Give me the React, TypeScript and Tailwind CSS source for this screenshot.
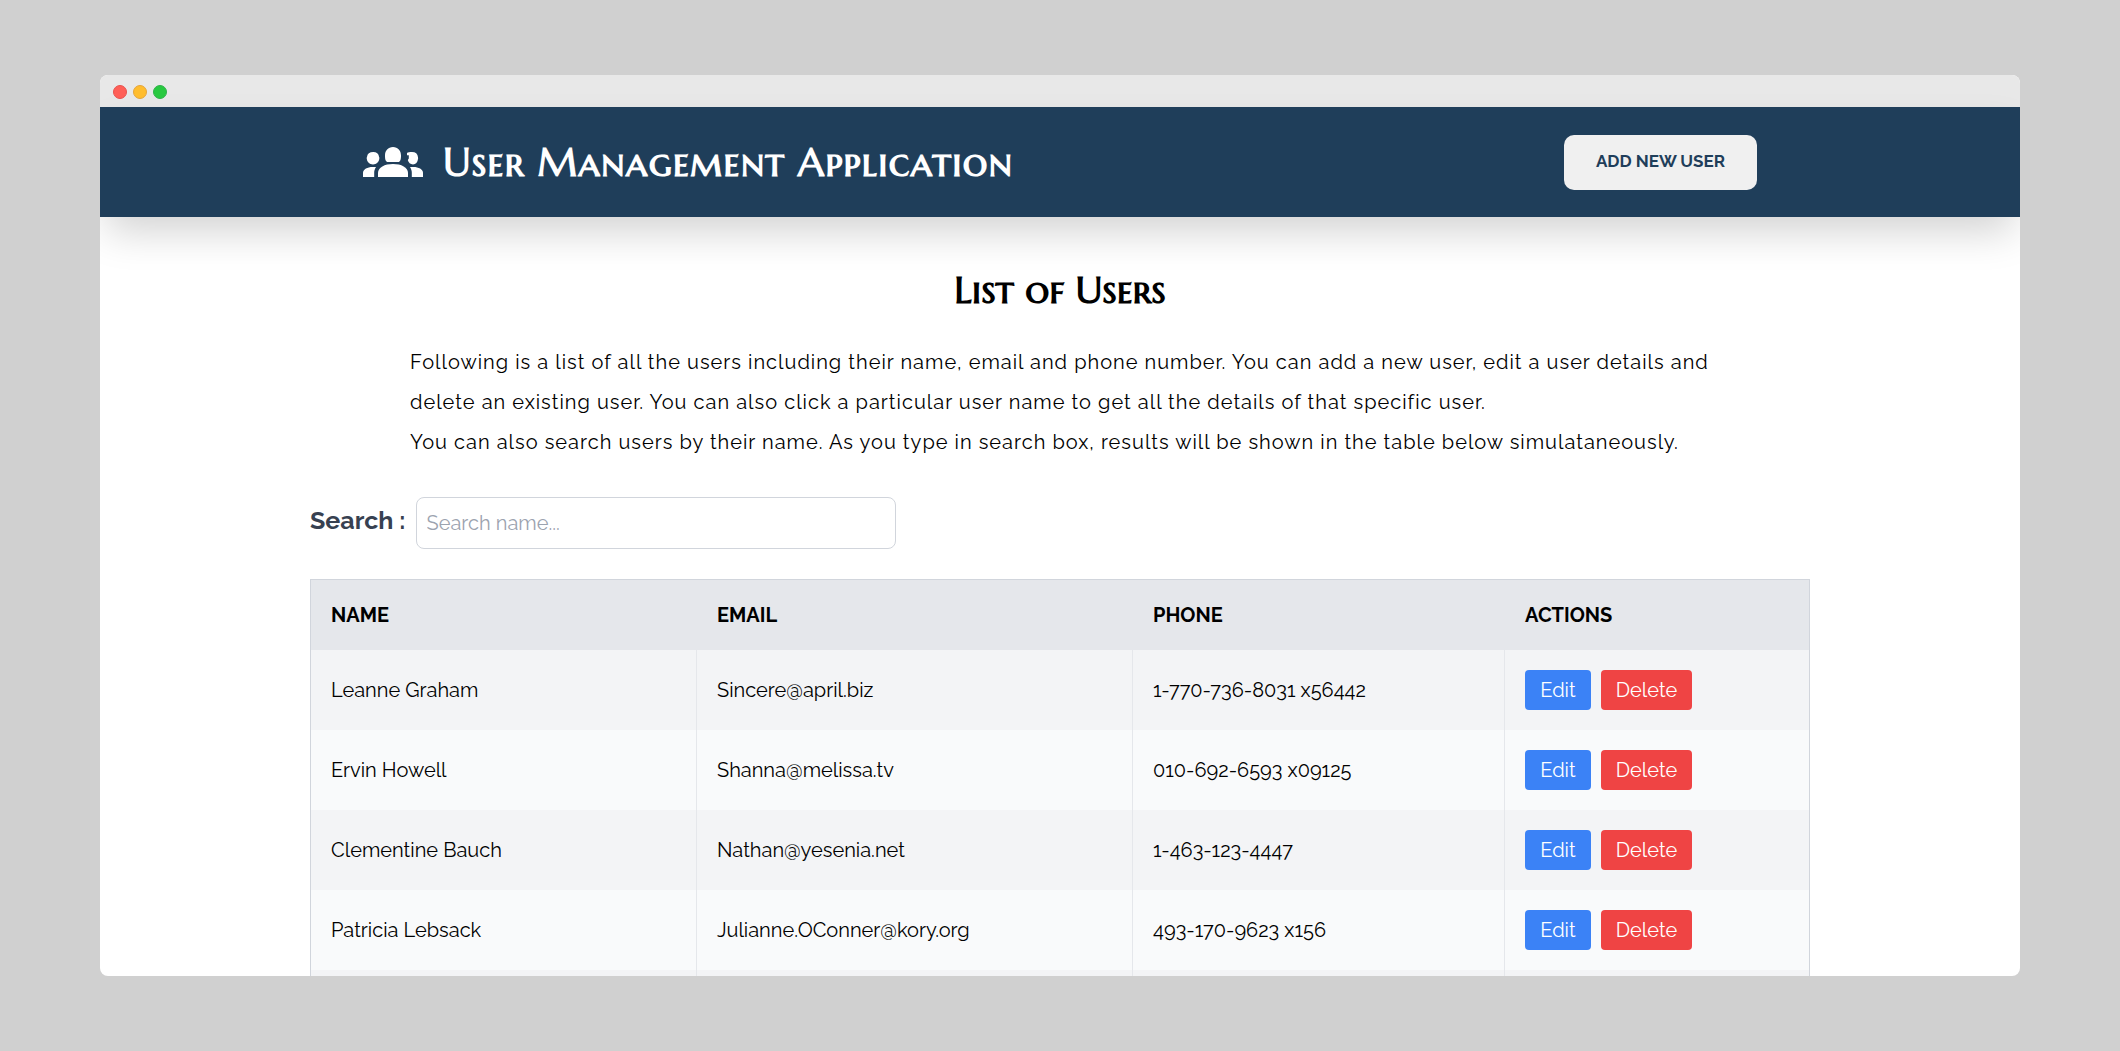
import { useState } from "react";

type User = { name: string; email: string; phone: string };

const users: User[] = [
  { name: "Leanne Graham", email: "Sincere@april.biz", phone: "1-770-736-8031 x56442" },
  { name: "Ervin Howell", email: "Shanna@melissa.tv", phone: "010-692-6593 x09125" },
  { name: "Clementine Bauch", email: "Nathan@yesenia.net", phone: "1-463-123-4447" },
  { name: "Patricia Lebsack", email: "Julianne.OConner@kory.org", phone: "493-170-9623 x156" },
];

function GroupIcon() {
  return (
    <svg viewBox="0 0 60 30" className="h-[30px] w-[60px] shrink-0" fill="currentColor" aria-hidden="true">
      <path d="M30 0c-4.900 0-8 3.600-8 8.500 0 2.500.2 4.500 1 5.400.7.900 1.500 1.100 2.500 1.100h9c1 0 1.800-.2 2.500-1.100.8-.9 1-2.900 1-5.400C38 3.600 34.900 0 30 0z" />
      <path d="M30 17c-8.300 0-15 3.400-15 9v4h30v-4c0-5.600-6.700-9-15-9z" />
      <path d="M10.200 5C6.600 5 4.300 6.700 4 10c-.3.600-.5 1-.2 1.800.3 3.200 2.800 5.600 6.200 5.600 3.500 0 5.900-2.400 6.300-5.600.2-.8.100-1.200-.2-1.800C15.700 6.700 13.600 5 10.200 5z" />
      <path d="M0 30v-4.200C0 22.300 4.500 20 9.500 20H13c-1.300 2-1.800 3.800-1.800 5.800V30z" />
      <path d="M44 6c1-.7 2.600-1 5-1 3.600 0 5.700 1.900 6 5.200.2.600.1 1.200 0 1.800-.4 3.200-2.200 5.400-5 5.400-2.700 0-4.500-1.700-5.200-4.400l1-1.500V8.200H44z" />
      <path d="M60 30v-4.200c0-3.500-4.500-5.800-9.500-5.800H47c1.300 2 1.800 3.800 1.800 5.800V30z" />
    </svg>
  );
}

export default function App() {
  const [query, setQuery] = useState("");
  const shown = users.filter((u) => u.name.toLowerCase().includes(query.toLowerCase()));

  return (
    <div className="flex h-screen flex-col bg-[#d0d0d0] px-[100px] py-[75px] font-[Raleway,Lato,sans-serif] text-xl text-black">
      <div className="flex-1 overflow-hidden rounded-lg bg-white">
        <div className="flex h-8 items-center gap-[6px] bg-[#e8e8e8] px-[13px] pt-0.5">
          <span className="size-[14px] rounded-full border border-[#e8524d] bg-[#ff5f57]" />
          <span className="size-[14px] rounded-full border border-[#e5a53a] bg-[#ffbd2e]" />
          <span className="size-[14px] rounded-full border border-[#2fb14a] bg-[#28c940]" />
        </div>

        <header className="bg-[#1f3e5a] shadow-[0_20px_40px_-6px_rgba(0,0,0,0.18)]">
          <div className="mx-auto flex h-[110px] w-full max-w-[1394px] items-center justify-between text-white">
            <div className="flex items-center gap-5">
              <GroupIcon />
              <h1 className="pt-0.5 font-['Marcellus_SC',Lato,sans-serif] text-[39px] leading-[60px] font-bold tracking-wide">
                User Management Application
              </h1>
            </div>
            <button type="button" className="h-[55px] w-[193px] rounded-[10px] bg-[#f0f0f0] pb-px text-[17px] font-bold text-[#1f3e5a]">
              ADD NEW USER
            </button>
          </div>
        </header>

        <main className="mx-auto w-full max-w-[1500px]">
          <h2 className="pt-[43px] text-center font-['Marcellus_SC',Lato,sans-serif] text-[38px] leading-[60px] font-bold">
            List of Users
          </h2>
          <p className="mx-auto mt-[22px] max-w-[1300px] leading-10 tracking-wider">
            Following is a list of all the users including their name, email and phone number. You can add a new user,
            edit a user details and delete an existing user. You can also click a particular user name to get all the
            details of that specific user.
            <br />
            You can also search users by their name. As you type in search box, results will be shown in the table below
            simulataneously.
          </p>

          <div className="mt-[35px] flex items-center">
            <label htmlFor="search" className="mr-2.5 pb-1.5 text-[25px] leading-8 font-bold text-[#374151]">
              Search :
            </label>
            <input
              id="search"
              type="text"
              value={query}
              onChange={(e) => setQuery(e.target.value)}
              placeholder="Search name..."
              className="h-[52px] w-[480px] rounded-lg border border-gray-300 px-2.5 placeholder:text-[#9ca3af]"
            />
          </div>

          <table className="mt-[30px] w-full table-fixed border-separate border-spacing-0 border-x border-t border-gray-300 text-left">
            <colgroup>
              <col className="w-[386px]" />
              <col className="w-[436px]" />
              <col className="w-[372px]" />
              <col />
            </colgroup>
            <thead>
              <tr className="h-[70px] bg-gray-200">
                <th className="px-5">NAME</th>
                <th className="px-5">EMAIL</th>
                <th className="px-5">PHONE</th>
                <th className="px-5">ACTIONS</th>
              </tr>
            </thead>
            <tbody>
              {shown.map((u) => (
                <tr key={u.email} className="h-20 odd:bg-gray-100 even:bg-gray-50">
                  <td className="border-r border-gray-200 px-5">{u.name}</td>
                  <td className="border-r border-gray-200 px-5">{u.email}</td>
                  <td className="border-r border-gray-200 px-5">{u.phone}</td>
                  <td className="px-5">
                    <div className="flex gap-2.5">
                      <button type="button" className="h-10 w-[66px] rounded bg-[#3b82f6] text-white">
                        Edit
                      </button>
                      <button type="button" className="h-10 w-[91px] rounded bg-[#ef4444] text-white">
                        Delete
                      </button>
                    </div>
                  </td>
                </tr>
              ))}
              <tr className="h-20 bg-gray-100">
                <td className="border-r border-gray-200" />
                <td className="border-r border-gray-200" />
                <td className="border-r border-gray-200" />
                <td />
              </tr>
            </tbody>
          </table>
        </main>
      </div>
    </div>
  );
}
